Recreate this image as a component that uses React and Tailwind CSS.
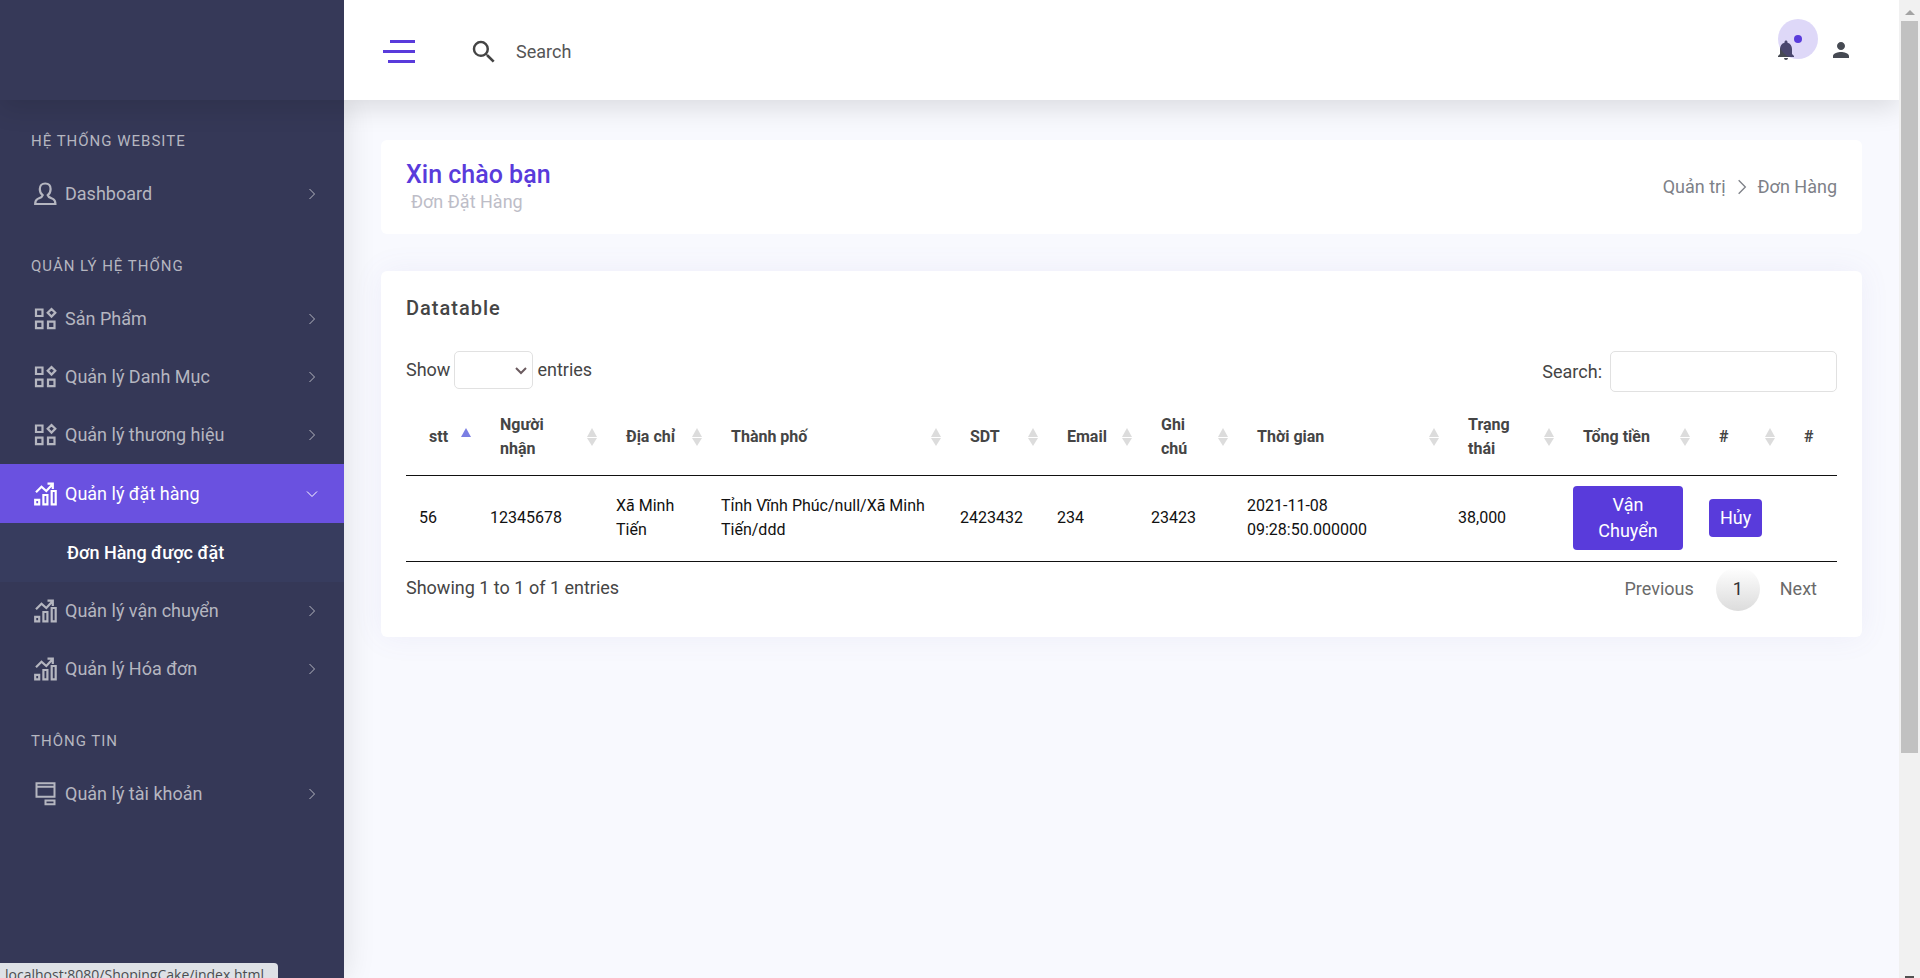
import React, { useState } from "react";
import { MdNotifications, MdPerson, MdSearch } from "react-icons/md";

const UserIcon = () => (
  <svg viewBox="0 0 24 24" className="h-6 w-6" fill="none" stroke="currentColor" strokeWidth="2.200">
    <path d="M9.7 13.2C7.600 11.800 6.800 9.400 6.800 7 6.800 3.600 8.900 1.500 12.200 1.500s5.400 2.100 5.400 5.500c0 2.400-.8 4.800-2.900 6.200.5 2.100 3.300 2.700 5.200 3.700 1.900 1 2.500 2.400 2.500 5.100H2.200c0-2.700.6-4.100 2.500-5.100 1.900-1 4.500-1.600 5-3.700z" />
  </svg>
);

const GridIcon = () => (
  <svg viewBox="0 0 24 24" className="h-6 w-6" fill="none" stroke="currentColor" strokeWidth="2.200">
    <path d="M3 2.500h6.500V9H3zM3 14.700h6.500v6.500H3zM15 14.700h6.500v6.500H15zM18.500 2l3.800 3.800-3.800 3.800-3.800-3.800z" />
  </svg>
);

const ChartIcon = () => (
  <svg viewBox="0 0 24 24" className="h-6 w-6" fill="none" stroke="currentColor" strokeWidth="2.200">
    <path d="M2.200 17.800h4v4.500h-4zM10.400 13h4v9.300h-4zM18.700 9h4v13.300h-4z" />
    <path d="M3 10.200l5.500-5.500 4.800 4.300 6-6.500M14.500 1.600h5.300v5.300" />
  </svg>
);

const AccountIcon = () => (
  <svg viewBox="0 0 24 24" className="h-6 w-6" fill="none" stroke="currentColor" strokeWidth="2">
    <path d="M3.500 1.200h18v13.500h-18zM3.500 4.800h18M12.500 18.500h9v3.800h-9z" />
  </svg>
);

const Chevron = ({ className }) => (
  <svg viewBox="0 0 12 12" className={className} fill="none" stroke="currentColor">
    <path d="M3.500 1l5 5-5 5" />
  </svg>
);

const menu = [
  {
    title: "HỆ THỐNG WEBSITE",
    items: [{ label: "Dashboard", icon: UserIcon }],
  },
  {
    title: "QUẢN LÝ HỆ THỐNG",
    items: [
      { label: "Sản Phẩm", icon: GridIcon },
      { label: "Quản lý Danh Mục", icon: GridIcon },
      { label: "Quản lý thương hiệu", icon: GridIcon },
      { label: "Quản lý đặt hàng", icon: ChartIcon, children: ["Đơn Hàng được đặt"] },
      { label: "Quản lý vận chuyển", icon: ChartIcon },
      { label: "Quản lý Hóa đơn", icon: ChartIcon },
    ],
  },
  {
    title: "THÔNG TIN",
    items: [{ label: "Quản lý tài khoản", icon: AccountIcon }],
  },
];

const columns = [
  { label: "stt", width: "w-[71px]", sort: "asc" },
  { label: "Người nhận", width: "w-[126px]", sort: "both" },
  { label: "Địa chỉ", width: "w-[105px]", sort: "both" },
  { label: "Thành phố", width: "w-[239px]", sort: "both" },
  { label: "SDT", width: "w-[97px]", sort: "both" },
  { label: "Email", width: "w-[94px]", sort: "both" },
  { label: "Ghi chú", width: "w-[96px]", sort: "both" },
  { label: "Thời gian", width: "w-[211px]", sort: "both" },
  { label: "Trạng thái", width: "w-[115px]", sort: "both" },
  { label: "Tổng tiền", width: "w-[136px]", sort: "both" },
  { label: "#", width: "w-[85px]", sort: "both" },
  { label: "#", width: "w-[56px]" },
];

const orders = [
  [
    "56",
    "12345678",
    "Xã Minh Tiến",
    "Tỉnh Vĩnh Phúc/null/Xã Minh Tiến/ddd",
    "2423432",
    "234",
    "23423",
    "2021-11-08 09:28:50.000000",
    "38,000",
  ],
];

const SortIcon = ({ sort }) => (
  <svg viewBox="0 0 10 20" className="absolute right-[6px] top-1/2 h-5 w-[10px] -translate-y-1/2">
    <path d="M5 1l5 9H0z" fill={sort === "asc" ? "#7b7fe3" : "#dcdcdc"} />
    {sort === "both" && <path d="M0 11h10l-5 8z" fill="#dcdcdc" />}
  </svg>
);

const Sidebar = () => (
  <aside className="w-[344px] shrink-0 bg-[#353857] text-[#b5b6c0] shadow-[0_0_30px_rgba(0,0,0,0.12)]">
    {menu.map((group, i) => (
      <section key={group.title}>
        <h2
          className={`px-[31px] pb-[14px] text-[15px] leading-5 tracking-[1px] ${
            i === 0 ? "pt-[31px]" : "pt-[33px]"
          }`}
        >
          {group.title}
        </h2>
        <ul>
          {group.items.map(({ label, icon: Icon, children }) => (
            <li key={label}>
              <a
                href="#"
                className={`flex items-center pl-[33px] pr-[26px] text-lg ${
                  children ? "h-[59px] bg-[#6a51e0] text-white" : "h-[58px]"
                }`}
              >
                <Icon />
                <span className="ml-2 flex-1">{label}</span>
                <Chevron className={children ? "h-3 w-3 rotate-90" : "h-3 w-3"} />
              </a>
              {children && (
                <ul className="bg-[#373c5e]">
                  {children.map((child) => (
                    <li key={child}>
                      <a
                        href="#"
                        className="flex h-[59px] items-center pl-[67px] text-lg font-medium text-white"
                      >
                        {child}
                      </a>
                    </li>
                  ))}
                </ul>
              )}
            </li>
          ))}
        </ul>
      </section>
    ))}
  </aside>
);

const Header = () => (
  <header className="relative z-10 flex h-[100px] shrink-0 bg-white shadow-[0_8px_25px_rgba(0,0,0,0.12)]">
    <div className="w-[344px] shrink-0 bg-[#363958]" />
    <div className="flex flex-1 items-center pl-[39px] pr-[46px]">
      <div className="flex min-w-0 flex-1 items-center pt-[3px]">
        <button type="button" aria-label="Menu" className="flex w-8 flex-col items-end gap-[7px]">
          <span className="h-[3px] w-[25px] bg-[#593bdb]" />
          <span className="h-[3px] w-8 bg-[#593bdb]" />
          <span className="h-[3px] w-[27px] bg-[#593bdb]" />
        </button>
        <label htmlFor="site-search" aria-label="Search" className="ml-[54px]">
          <MdSearch className="h-[30px] w-[30px] text-[#444444]" />
        </label>
        <input
          id="site-search"
          type="text"
          placeholder="Search"
          className="ml-[17px] min-w-0 flex-1 text-lg text-[#454545] outline-none placeholder:text-[#555555]"
        />
      </div>
      <button type="button" aria-label="Notifications" className="relative text-[#464a53]">
        <MdNotifications className="h-6 w-6" />
        <span className="absolute -top-[19px] left-1 flex h-10 w-10 items-center justify-center rounded-full bg-[#593bdb]/20">
          <span className="h-2 w-2 rounded-full bg-[#593bdb]" />
        </span>
      </button>
      <button type="button" aria-label="Account" className="ml-[31px] text-[#464a53]">
        <MdPerson className="h-6 w-6" />
      </button>
    </div>
  </header>
);

const OrdersTable = () => (
  <table className="w-full table-fixed border-b border-[#111111] text-base leading-6">
    <colgroup>
      {columns.map((col, i) => (
        <col key={i} className={col.width} />
      ))}
    </colgroup>
    <thead>
      <tr className="h-[76px] border-b border-[#111111] text-left text-[#454545]">
        {columns.map((col, i) => (
          <th key={i} className="relative pl-[23px] pr-6 font-bold">
            {col.label}
            {col.sort && <SortIcon sort={col.sort} />}
          </th>
        ))}
      </tr>
    </thead>
    <tbody className="text-[#111111]">
      {orders.map((row) => (
        <tr key={row[0]} className="h-[86px]">
          {row.map((cell, i) => (
            <td key={i} className="px-[13px]">
              {cell}
            </td>
          ))}
          <td className="px-[13px]">
            <button
              type="button"
              className="w-full rounded-[4px] bg-[#593bdb] px-5 py-[6px] text-lg leading-[26px] text-white"
            >
              Vận Chuyển
            </button>
          </td>
          <td className="px-[13px]">
            <button
              type="button"
              className="rounded-[4px] bg-[#593bdb] px-[11px] py-[6px] text-lg leading-[26px] text-white"
            >
              Hủy
            </button>
          </td>
          <td />
        </tr>
      ))}
    </tbody>
  </table>
);

const Scrollbar = () => (
  <div className="relative z-20 flex w-[21px] shrink-0 flex-col items-center justify-between bg-[#f1f1f1]">
    <div className="flex h-[77%] flex-col items-center">
      <svg viewBox="0 0 10 6" className="mb-[6px] mt-[9px] h-[6px] w-[10px] shrink-0">
        <path d="M0 6l5-5 5 5z" fill="#a3a3a3" />
      </svg>
      <div className="w-[17px] flex-1 bg-[#c1c1c1]" />
    </div>
    <div className="h-[2px] w-[9px] bg-[#505050]" />
  </div>
);

const App = () => {
  const [entries, setEntries] = useState("");
  const [search, setSearch] = useState("");

  return (
    <div className="flex h-screen overflow-hidden bg-[#f8f9fe] font-['Roboto',sans-serif] text-lg text-[#454545]">
      <div className="flex min-w-0 flex-1 flex-col">
        <Header />
        <div className="flex min-h-0 flex-1">
          <Sidebar />
          <main className="min-w-0 flex-1 px-[37px] pt-10">
            <div className="flex items-center justify-between rounded-[6px] bg-white px-[25px] py-5">
              <div>
                <h1 className="text-[25px] leading-[30px] font-medium text-[#593bdb]">Xin chào bạn</h1>
                <p className="pl-[5px] leading-6 text-[#bdbdc7]">Đơn Đặt Hàng</p>
              </div>
              <nav className="flex items-center gap-2 text-[#7e8188]">
                <a href="#">Quản trị</a>
                <Chevron className="h-4 w-4" />
                <a href="#">Đơn Hàng</a>
              </nav>
            </div>

            <div className="mt-[37px] rounded-[6px] bg-white px-[25px] pb-[26px] pt-[22px] shadow-[0_0_30px_rgba(115,103,195,0.08)]">
              <h2 className="text-xl leading-[30px] font-medium tracking-[1px]">Datatable</h2>
              <div className="mt-7 flex items-start justify-between">
                <label className="flex items-center gap-1">
                  Show
                  <span className="relative">
                    <select
                      value={entries}
                      onChange={(e) => setEntries(e.target.value)}
                      className="block h-[38px] w-[79px] appearance-none rounded-[5px] border border-[#e1e1e1] bg-white pl-2"
                    >
                      <option value=""></option>
                      <option value="10">10</option>
                      <option value="25">25</option>
                    </select>
                    <svg
                      viewBox="0 0 12 8"
                      className="pointer-events-none absolute right-[6px] top-4 h-2 w-3"
                      fill="none"
                      stroke="#6b5b5f"
                      strokeWidth="2"
                    >
                      <path d="M1 1l5 5 5-5" />
                    </svg>
                  </span>
                  entries
                </label>
                <label className="flex items-center gap-2">
                  Search:
                  <input
                    type="search"
                    value={search}
                    onChange={(e) => setSearch(e.target.value)}
                    className="h-[41px] w-[227px] rounded-[5px] border border-[#e1e1e1] px-3 outline-none"
                  />
                </label>
              </div>

              <div className="mt-[7px]">
                <OrdersTable />
              </div>

              <div className="mt-[5px] flex items-center justify-between">
                <p className="pb-[2px]">Showing 1 to 1 of 1 entries</p>
                <div className="flex items-center gap-[2px] text-[#6a6a6a]">
                  <button type="button" className="px-5">Previous</button>
                  <button
                    type="button"
                    className="h-11 w-11 rounded-full bg-linear-to-b from-white to-[#dcdcdc] text-[#333333]"
                  >
                    1
                  </button>
                  <button type="button" className="pl-[18px] pr-5">Next</button>
                </div>
              </div>
            </div>
          </main>
        </div>
      </div>
      <Scrollbar />

      {/* link preview */}
      <div className="fixed bottom-0 left-0 z-20 h-[15px] w-[278px] overflow-hidden rounded-tr-[4px] bg-[#dee1e6] px-[5px] pt-[2px] font-['Open_Sans',sans-serif] text-sm leading-5 text-[#4b4d51]">
        localhost:8080/ShopingCake/index.html
      </div>
    </div>
  );
};

export default App;
